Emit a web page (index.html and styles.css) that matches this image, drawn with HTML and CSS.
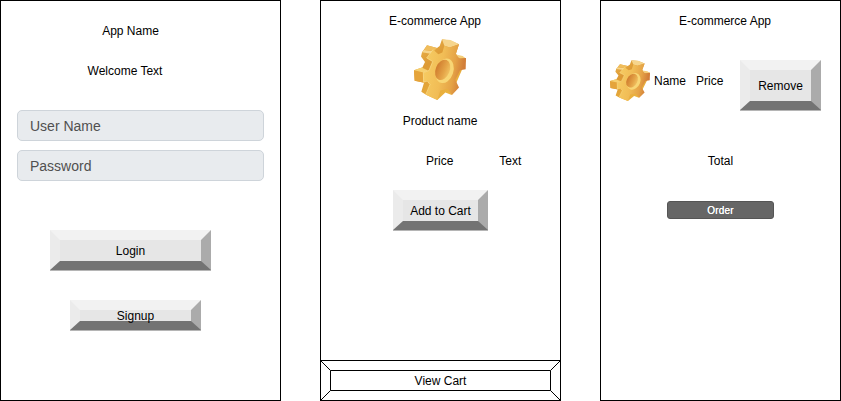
FILE: index.html
```html
<!DOCTYPE html>
<html lang="en">
<head>
<meta charset="utf-8">
<title>E-commerce App</title>
<link rel="stylesheet" href="styles.css">
</head>
<body>
<svg class="defs" aria-hidden="true">
  <defs>
    <linearGradient id="face" gradientUnits="userSpaceOnUse" x1="75" y1="100" x2="200" y2="120">
      <stop offset="0" stop-color="#f6cb62"/><stop offset=".4" stop-color="#f1bd56"/>
      <stop offset=".7" stop-color="#e5a346"/><stop offset=".9" stop-color="#d3803a"/>
      <stop offset="1" stop-color="#cf7a36"/>
    </linearGradient>
    <linearGradient id="side" x1="0" y1="0" x2=".7" y2="1">
      <stop offset="0" stop-color="#eebb55"/><stop offset=".4" stop-color="#dd9a35"/>
      <stop offset="1" stop-color="#edb740"/>
    </linearGradient>
    <linearGradient id="hole" x1="0" y1="0" x2="1" y2="0">
      <stop offset="0" stop-color="#d07c2e"/><stop offset=".65" stop-color="#e5a548"/>
      <stop offset="1" stop-color="#f0c060"/>
    </linearGradient>
    <symbol id="gear" viewBox="42 27 156 184" preserveAspectRatio="none">
      <path fill="url(#side)" d="M126 28L152 32 177 43 168 71 176 84 198 84 197 94 160 180 155 196 136 188 112 211 78 195 64 186 72 159 44 153 42 121 67 113 75 96 63 80 66 67 81 46 111 54 119 48Z"/>
      <path fill="#f6d58c" d="M126 28L152 30 177 43 149 53 133 47ZM66 67L72 60 101 64 96 72Z"/>
      <path fill="#f0bd5c" d="M81 46L111 54 102 63 72 60Z"/>
      <path fill="#e5a43b" d="M42 121L70 128 71 158 44 153Z"/>
      <path fill="#f6d071" d="M42 121L65 113 84 122 70 128Z"/>
      <path fill="#f4ce79" d="M168 74L188 78 197 85 179 86Z"/>
      <path fill="url(#face)" d="M133 47L149 53 177 43 167 74 179 86 198 84 197 118 180 121 166 150 177 173 156 196 142 178 121 182 112 211 78 195 90 164 82 153 70 158 70 128 87 122 98 95 80 84 99 59 115 73 127 68Z"/>
      <path fill="none" stroke="#fae092" stroke-width="2" d="M78 193L90 164 82 154 71 157 70 128 87 122 98 95 80 84 99 59"/>
      <ellipse cx="134" cy="123" rx="26" ry="38" transform="rotate(18 134 123)" fill="#f8d675"/>
      <ellipse cx="128" cy="120" rx="21" ry="32" transform="rotate(22 128 120)" fill="url(#hole)"/>
    </symbol>
  </defs>
</svg>
<main class="board">
  <section class="screen login">
    <div class="label title">App Name</div>
    <div class="label welcome">Welcome Text</div>
    <div class="field">User Name</div>
    <div class="field">Password</div>
    <div class="bevel sign-in"><span>Login</span></div>
    <div class="bevel sign-up"><span>Signup</span></div>
  </section>
  <section class="screen product">
    <div class="label heading">E-commerce App</div>
    <svg class="gear-large"><use href="#gear"/></svg>
    <div class="label product-name">Product name</div>
    <div class="details"><span>Price</span><span>Text</span></div>
    <div class="bevel add"><span>Add to Cart</span></div>
    <div class="view-cart">
      <svg class="frame" viewBox="0 0 241 41"><path d="M.5 .5H240.500V40.500H.5ZM10.500 10.500H230.500V30.500H10.500ZM.5 .5L10.500 10.500M240.500 .5L230.500 10.500M.5 40.500L10.500 30.500M240.500 40.500L230.500 30.500"/></svg>
      <span>View Cart</span>
    </div>
  </section>
  <section class="screen cart">
    <div class="label cart-heading">E-commerce App</div>
    <div class="item">
      <svg class="gear-small"><use href="#gear"/></svg>
      <span class="item-name">Name</span>
      <span class="item-price">Price</span>
      <div class="bevel remove"><span>Remove</span></div>
    </div>
    <div class="label total">Total</div>
    <div class="order">Order</div>
  </section>
</main>
</body>
</html>
```
FILE: styles.css
```css
* { box-sizing: border-box; }
body {
  margin: 0;
  background: #fff;
  color: #000;
  font: 12px/20px "Liberation Sans", Arial, sans-serif;
}
.defs { position: absolute; width: 0; height: 0; }
.board {
  display: grid;
  grid-template-columns: 281px 241px 241px;
  gap: 39px;
  width: 841px;
  height: 401px;
}
.screen {
  display: flex;
  flex-direction: column;
  border: 1px solid #000;
  height: 401px;
}
.label { height: 20px; text-align: center; }

.login { padding: 20px 16px 0; }
.title { margin-right: 20px; }
.welcome { margin: 20px 31px 0 0; }
.field {
  width: 247px;
  height: 31px;
  margin-bottom: 9px;
  padding-left: 12px;
  border: 1px solid #ced4da;
  border-radius: 5px;
  background: #e8ebee;
  color: #505050;
  font-size: 14px;
  line-height: 30px;
}
.welcome + .field { margin-top: 29px; }

.bevel {
  display: grid;
  place-content: center;
  border: 10px solid;
  border-bottom-width: 9px;
  border-color: #f2f2f2 #ababab #737373 #ebebeb;
  background: #e6e6e6;
  box-shadow: 0 1px #b5b5b5;
  white-space: nowrap;
}
.sign-in {
  width: 161px;
  height: 40px;
  margin: 40px 0 0 33px;
}
.sign-up {
  width: 131px;
  height: 30px;
  margin: 30px 0 0 53px;
}

.product { padding-top: 10px; }
.heading { margin-right: 11px; }
.gear-large { width: 52px; height: 61px; margin: 8px 0 0 93px; }
.product-name { margin: 11px 1px 0 0; }
.details {
  display: flex;
  gap: 46px;
  margin: 20px 0 0 105px;
}
.add {
  width: 95px;
  height: 40px;
  margin: 19px 0 0 72px;
}
.view-cart {
  display: grid;
  place-items: center;
  width: 241px;
  height: 41px;
  margin: auto -1px -1px;
}
.view-cart > * { grid-area: 1 / 1; }
.frame { width: 241px; height: 41px; fill: none; stroke: #000; }

.cart { padding-top: 10px; }
.cart-heading { margin-left: 9px; }
.item {
  display: flex;
  align-items: flex-start;
  height: 51px;
  margin: 29px 0 0 9px;
}
.gear-small { width: 40px; height: 41px; }
.item-name { width: 33px; margin: 11px 0 0 4px; }
.item-price { margin: 11px 0 0 9px; }
.remove { width: 81px; height: 50px; margin: 0 19px 0 auto; }
.total { margin: 40px 0 0; }
.order {
  width: 107px;
  height: 18px;
  margin: 30px 0 0 66px;
  border: 1px solid #555;
  border-radius: 3px;
  background: #666;
  color: #fff;
  font: 10px/17px "Liberation Sans", Arial, sans-serif;
  letter-spacing: .2px;
  text-align: center;
  text-shadow: 0 0 .5px #fff;
}
```
